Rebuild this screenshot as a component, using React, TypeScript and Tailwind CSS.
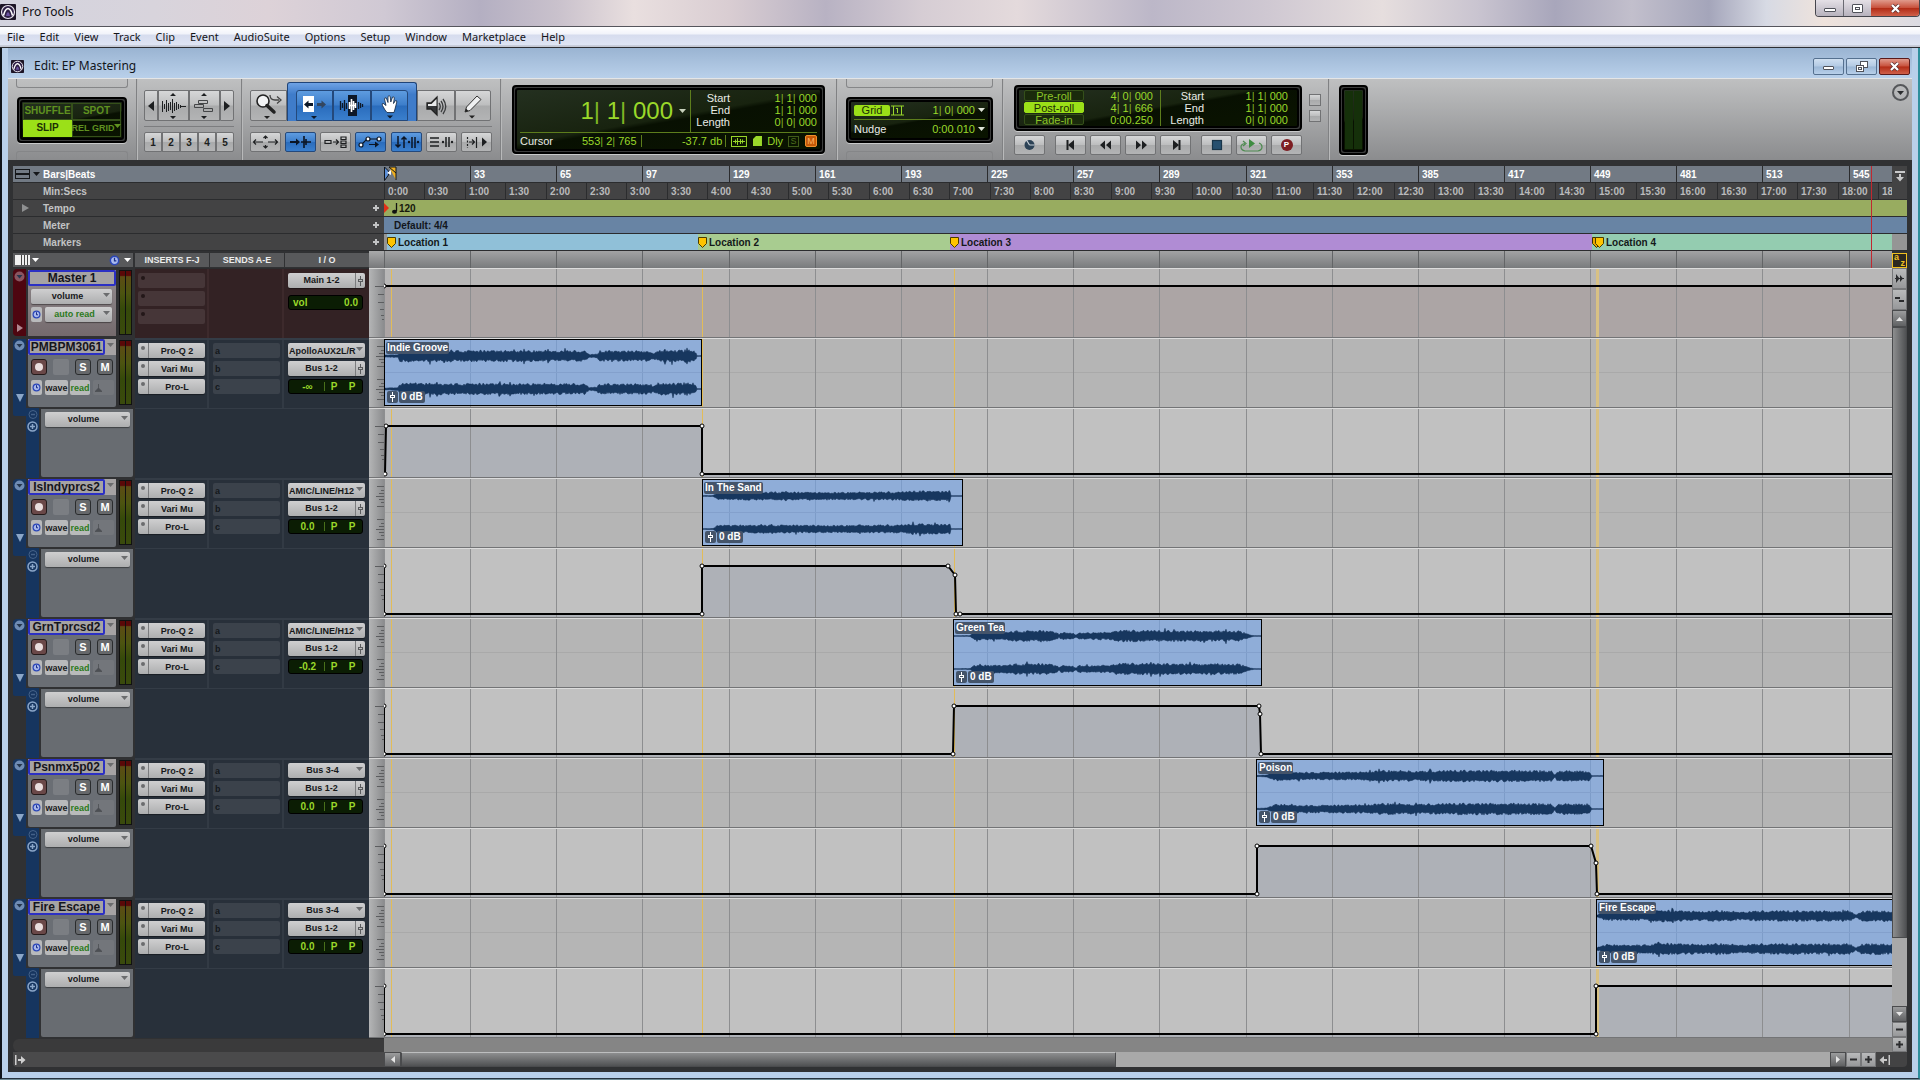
import type { ReactNode } from "react";
import clsx from "clsx";

type Point = [number, number];

interface Clip {
  name: string;
  start: number;
  width: number;
  envelope: Point[];
}

interface Track {
  name: string;
  input: string;
  output: string;
  level: string;
  clip: Clip;
  automation: Point[];
  seed: number;
}

// Pixels for 32 bars and for 30 seconds at 120 bpm
const BARS_STEP = 86.15;
const SECS_STEP = 40.38;
const TIMELINE_END = 2400;

const MENUS = [
  "File",
  "Edit",
  "View",
  "Track",
  "Clip",
  "Event",
  "AudioSuite",
  "Options",
  "Setup",
  "Window",
  "Marketplace",
  "Help",
];

const GRID_LINES = Array.from({ length: 28 }, (_, i) => Math.round(i * BARS_STEP));

const BAR_TICKS = Array.from({ length: 18 }, (_, i) => ({
  label: i === 0 ? "" : String(i * 32 + 1),
  width: Math.round((i + 1) * BARS_STEP) - Math.round(i * BARS_STEP),
}));

const SEC_TICKS = Array.from({ length: 38 }, (_, i) => ({
  label: `${Math.floor(i / 2)}:${i % 2 ? "30" : "00"}`,
  width: Math.round((i + 1) * SECS_STEP) - Math.round(i * SECS_STEP),
}));

const LOCATIONS = [
  { name: "Location 1", x: 7, width: 311, color: "bg-[#90c0d8]" },
  { name: "Location 2", x: 318, width: 252, color: "bg-[#a8cc90]" },
  { name: "Location 3", x: 570, width: 642, color: "bg-[#b08cd4]" },
  { name: "Location 4", x: 1212, width: 0, color: "bg-[#94ccb0]" },
];

const TRACKS: Track[] = [
  {
    name: "PMBPM3061",
    input: "ApolloAUX2L/R",
    output: "Bus 1-2",
    level: "-∞",
    seed: 3,
    clip: {
      name: "Indie Groove",
      start: 0,
      width: 318,
      envelope: [[0, 1], [13, 1.5], [15, 5.5], [200, 5], [204, 1.5], [212, 1.8], [215, 5], [262, 5], [268, 3], [276, 5.5], [308, 6], [311, 3], [312, 0.3]],
    },
    automation: [[1, 66], [2, 18], [318, 18], [318, 66]],
  },
  {
    name: "IsIndyprcs2",
    input: "AMIC/LINE/H12",
    output: "Bus 1-2",
    level: "0.0",
    seed: 11,
    clip: {
      name: "In The Sand",
      start: 318,
      width: 261,
      envelope: [[0, 0.3], [10, 0.5], [14, 3.5], [60, 4], [120, 3.5], [200, 4], [214, 5], [247, 4.5], [248, 0.3]],
    },
    automation: [[0, 18], [0, 66], [318, 66], [318, 18], [564, 18], [571, 27], [572, 66], [576, 66]],
  },
  {
    name: "GrnTprcsd2",
    input: "AMIC/LINE/H12",
    output: "Bus 1-2",
    level: "-0.2",
    seed: 23,
    clip: {
      name: "Green Tea",
      start: 569,
      width: 309,
      envelope: [[0, 0.3], [16, 0.4], [20, 3.5], [50, 4], [62, 5], [95, 5], [104, 3], [105, 1], [107, 3.5], [119, 3], [122, 1], [124, 3], [155, 3.5], [163, 5.5], [235, 5], [285, 5], [297, 1], [300, 0.3]],
    },
    automation: [[0, 18], [0, 66], [569, 66], [570, 18], [875, 18], [876, 26], [877, 66]],
  },
  {
    name: "Psnmx5p02",
    input: "Bus 3-4",
    output: "Bus 1-2",
    level: "0.0",
    seed: 37,
    clip: {
      name: "Poison",
      start: 872,
      width: 348,
      envelope: [[0, 0.6], [10, 1], [18, 4.5], [50, 3.5], [105, 4], [125, 5.5], [160, 4.5], [200, 5.5], [270, 5.5], [295, 5], [298, 1], [300, 5], [332, 5], [334, 2], [335, 0.3]],
    },
    automation: [[0, 18], [0, 66], [873, 66], [873, 18], [1207, 18], [1212, 35], [1213, 66]],
  },
  {
    name: "Fire Escape",
    input: "Bus 3-4",
    output: "Bus 1-2",
    level: "0.0",
    seed: 51,
    clip: {
      name: "Fire Escape",
      start: 1212,
      width: 620,
      envelope: [[0, 1], [8, 4], [45, 4], [65, 5.5], [110, 4.5], [120, 5.5], [140, 4], [170, 5], [253, 5], [259, 1.2], [265, 5], [610, 5], [620, 0.3]],
    },
    automation: [[0, 18], [0, 66], [1212, 66], [1212, 18]],
  },
];

function noise(n: number) {
  const v = Math.sin(n * 127.1) * 43758.5453;
  return v - Math.floor(v);
}

function envelopeAt(envelope: Point[], x: number) {
  for (let i = 1; i < envelope.length; i++) {
    const [x0, a0] = envelope[i - 1];
    const [x1, a1] = envelope[i];
    if (x <= x1) return a0 + ((a1 - a0) * (x - x0)) / (x1 - x0 || 1);
  }
  return envelope[envelope.length - 1][1];
}

function wavePath(clip: Clip, center: number, seed: number) {
  const top: string[] = [];
  const bottom: string[] = [];
  for (let x = 0; x <= clip.width; x++) {
    const amp = envelopeAt(clip.envelope, x);
    const spike = noise(x + seed * 7) > 0.965 ? 1.4 : 1;
    const up = amp * (0.62 + 0.5 * noise(x * 2 + seed)) * spike;
    const down = amp * (0.62 + 0.5 * noise(x * 3 + seed * 5)) * spike;
    top.push(`${x} ${(center - up).toFixed(1)}`);
    bottom.unshift(`${x} ${(center + down).toFixed(1)}`);
  }
  return `M${top.join("L")}L${bottom.join("L")}Z`;
}

function Caret({ className }: { className?: string }) {
  return (
    <svg width="7" height="4" viewBox="0 0 7 4" className={clsx("pointer-events-none shrink-0", className)}>
      <path d="M0 0h7L3.5 4z" fill="currentColor" />
    </svg>
  );
}

function Avid({ className }: { className?: string }) {
  return (
    <svg width="16" height="16" viewBox="0 0 16 16" className={className}>
      <rect width="16" height="16" rx="1" fill="#1c1426" />
      <circle cx="8" cy="8" r="6.5" fill="#2e1f45" stroke="#e8e4ee" strokeWidth="1.2" />
      <path d="M3.5 11.5Q5 5 8 4.500Q11 5 12.500 11.500" fill="none" stroke="#fff" strokeWidth="1.6" />
      <path d="M6 12Q6.500 8.500 8 8Q9.500 8.500 10 12z" fill="#6b52a0" />
    </svg>
  );
}

function Clock({ size = 9 }: { size?: number }) {
  return (
    <svg width={size} height={size} viewBox="0 0 9 9">
      <circle cx="4.500" cy="4.500" r="3.400" fill="#a9b9ee" stroke="#2b46b8" strokeWidth="1.2" />
      <path d="M4.500 2.200v2.600h1.500" fill="none" stroke="#1c2f86" />
    </svg>
  );
}

function FaderIcon({ className }: { className?: string }) {
  return (
    <svg width="7" height="10" viewBox="0 0 7 10" className={className}>
      <path d="M3.500 0v3M3.500 6v4" stroke="currentColor" />
      <rect x="1.500" y="3.500" width="4" height="2" fill="none" stroke="currentColor" />
    </svg>
  );
}

function Lcd({ className, children }: { className?: string; children?: ReactNode }) {
  return (
    <div className={clsx("rounded-[4px] border-2 border-black bg-[#3b3c3c] p-px shadow-[0_1px_0_#c8c9ca]", className)}>
      <div className="h-full rounded-[3px] border-2 border-black bg-[#0b1503] bg-[linear-gradient(170deg,#243020_0%,#18230f_48%,#081002_52%,#0a1400_100%)]">
        {children}
      </div>
    </div>
  );
}

const GREY_BTN =
  "flex items-center justify-center border border-[#717274] bg-[linear-gradient(#d6d7d8,#bdbebf_48%,#a9aaab_52%,#b3b4b5)] text-[#1d1f21]";
const BLUE_BTN =
  "flex items-center justify-center border border-[#24497c] bg-[linear-gradient(#5e9ce0,#3d7ecb_48%,#2a6cbc_52%,#3a7fcd)] text-[#0b1524]";

function SmallBtn({ label, active, children }: { label: string; active?: boolean; children: ReactNode }) {
  return (
    <button
      aria-label={label}
      aria-pressed={!!active}
      className={clsx("h-5 w-[31px] rounded-[2px]", active ? BLUE_BTN : GREY_BTN)}
    >
      <svg width="29" height="18" viewBox="0 0 29 18" fill="none" stroke="currentColor" strokeWidth="1.2">
        {children}
      </svg>
    </button>
  );
}

function Notch({ flip }: { flip?: boolean }) {
  return (
    <div
      className={clsx(
        "h-[9px] border-[#858688]",
        flip ? "rounded-t-[3px] border-x border-t" : "rounded-b-[3px] border-x border-b",
      )}
    />
  );
}

function Counter({ value, className }: { value: string; className?: string }) {
  return (
    <span className={clsx("whitespace-pre text-[#9ad82a]", className)}>
      {value.split("|").map((part, i) => (
        <span key={i}>
          {i > 0 && <span className="text-[#7fb424]">|</span>}
          {part}
        </span>
      ))}
    </span>
  );
}

function Group({ className, children }: { className?: string; children?: ReactNode }) {
  return (
    <div className={clsx("flex shrink-0 flex-col border-r border-[#808183] shadow-[1px_0_0_#b8b9ba]", className)}>
      {children}
    </div>
  );
}

function EditModes() {
  return (
    <Group className="w-[129px] justify-between px-2">
      <Notch />
      <Lcd className="mx-px h-[46px]">
        <div className="grid h-full grid-cols-2 grid-rows-2 p-px text-[10px] font-bold leading-3">
          <button className="border border-[#35501a] text-[#5f9120]">SHUFFLE</button>
          <button className="border border-[#35501a] text-[#5f9120]">SPOT</button>
          <button className="bg-[#9be018] text-[#1c2f04]" aria-pressed="true">
            SLIP
          </button>
          <button className="flex items-center justify-center whitespace-nowrap border border-[#35501a] text-[9px] text-[#5f9120]">
            REL GRID
            <Caret className="mb-1" />
          </button>
        </div>
      </Lcd>
      <Notch flip />
    </Group>
  );
}

function ZoomControls() {
  return (
    <Group className="w-[105px] px-[7px] pt-[11px]">
      <div className="flex">
        <button aria-label="Zoom out" className={clsx(GREY_BTN, "h-[31px] w-[14px] rounded-l-[2px]")}>
          <svg width="6" height="10" viewBox="0 0 6 10"><path d="M6 0v10L0 5z" fill="currentColor" /></svg>
        </button>
        <button aria-label="Audio zoom" className={clsx(GREY_BTN, "h-[31px] w-[31px]")}>
          <svg width="25" height="26" viewBox="0 0 25 26" fill="currentColor" stroke="currentColor">
            <path d="M9 3l3-3 3 3zM9 23l3 3 3-3z" stroke="none" />
            <path d="M1.500 8v11M3.500 11v5M5.500 7v12M7.500 10v8M9.500 9v8M11.500 6v14M13.500 10v8M15.500 9v8M17.500 11v5M19.500 12v3M20 13.500h5" />
          </svg>
        </button>
        <button aria-label="MIDI zoom" className={clsx(GREY_BTN, "h-[31px] w-[31px]")}>
          <svg width="25" height="26" viewBox="0 0 25 26" fill="none" stroke="#444648">
            <path d="M9 3l3-3 3 3zM9 23l3 3 3-3z" fill="#1d1f21" stroke="none" />
            <path d="M6.500 7.500h9v3h-9zM2.500 11.500h9v3h-9zM11.500 15.500h9v3h-9z" />
          </svg>
        </button>
        <button aria-label="Zoom in" className={clsx(GREY_BTN, "h-[31px] w-[14px] rounded-r-[2px]")}>
          <svg width="6" height="10" viewBox="0 0 6 10"><path d="M0 0v10l6-5z" fill="currentColor" /></svg>
        </button>
      </div>
      <div className="mt-[5px] h-px bg-[#7c7d7f]" />
      <div className="mt-[5px] flex">
        {["1", "2", "3", "4", "5"].map((n) => (
          <button key={n} className={clsx(GREY_BTN, "h-5 w-[18px] text-[10px] font-bold first:rounded-l-[2px] last:rounded-r-[2px]")}>
            {n}
          </button>
        ))}
      </div>
    </Group>
  );
}

function EditTools() {
  return (
    <Group className="w-[259px] px-2 pt-[3px]">
      <div className="flex items-end">
        <button aria-label="Zoomer" className={clsx(GREY_BTN, "h-[31px] w-[37px] rounded-l-[2px]")}>
          <svg width="30" height="28" viewBox="0 0 30 28" fill="none">
            <circle cx="9" cy="9" r="6" fill="#f2f3f4" stroke="#222" strokeWidth="1.6" />
            <path d="M13 13.500l7 6.500" stroke="#222" strokeWidth="3.5" strokeLinecap="round" />
            <path d="M16 3q0 5 5 5h4M23 4.500l4 3.500-4 3.500" stroke="#444" strokeWidth="1.3" />
            <path d="M10 24h6l-3 3z" fill="#222" />
          </svg>
        </button>
        <div className="flex rounded-t-[3px] border border-b-0 border-[#1f4478] bg-[linear-gradient(#6ea2e4,#3f7cca_30%)] px-2 pt-[7px]">
          <button aria-label="Trim" aria-pressed="true" className={clsx(BLUE_BTN, "h-[31px] w-[37px] rounded-tl-[3px]")}>
            <svg width="26" height="26" viewBox="0 0 26 26" fill="none" stroke="#0d1828">
              <rect x="1" y="3" width="11" height="16" fill="#fff" stroke="none" />
              <path d="M2 11.500l4.500-4v2.500H11v3H6.500v2.500z" fill="#0d1828" stroke="none" />
              <path d="M24 11.500l-4.500-4v2.500H15v3h4.500v2.500z" fill="#33465f" stroke="none" />
              <path d="M9 23h6l-3 3z" fill="#0d1828" stroke="none" />
            </svg>
          </button>
          <button aria-label="Selector" aria-pressed="true" className={clsx(BLUE_BTN, "h-[31px] w-[38px]")}>
            <svg width="28" height="24" viewBox="0 0 28 24" stroke="#0d1828">
              <rect x="10" y="1" width="9" height="21" fill="#0d1828" stroke="none" />
              <path d="M2.500 7v9M4.500 9v5M6.500 6v11M8.500 9v6M20.500 8v7M22.500 9v5M24.500 10v3" strokeWidth="1.300" />
              <path d="M11 11.500h7M11.500 8v7M13.500 5v13M15.500 7v9M17.500 9v5" stroke="#fff" strokeWidth="1.600" />
            </svg>
          </button>
          <button aria-label="Grabber" aria-pressed="true" className={clsx(BLUE_BTN, "h-[31px] w-[37px] rounded-tr-[3px]")}>
            <svg width="22" height="26" viewBox="0 0 22 26">
              <path
                d="M6 17L3.500 12.500Q2.500 10.500 4 10.200L7 12.500 5.500 6Q5.600 4 7.400 5.200L9 9.500 9 3.500Q10 1.800 11.200 3.500L11.800 9 13.500 4Q15 3.200 15.300 5L14.500 10.500 16.500 7.500Q18 7.300 17.800 9L16 16 15 19.500H8z"
                fill="#fff"
                stroke="#10233c"
                strokeWidth="0.8"
              />
              <path d="M8 22.500h6l-3 3z" fill="#0d1828" />
            </svg>
          </button>
        </div>
        <button aria-label="Scrubber" className={clsx(GREY_BTN, "h-[31px] w-[38px]")}>
          <svg width="22" height="22" viewBox="0 0 22 22" fill="none" stroke="#3a3c3e" strokeWidth="1.3">
            <path d="M2 8h4l6-6v18l-6-6H2z" fill="#333537" stroke="#222" />
            <path d="M3 9h3.500l5-5v7H3z" fill="#e8e9ea" stroke="none" />
            <path d="M14 8q2.500 3.500 0 7M16 6q4 5.500 0 11M18 4q5.500 7.500 0 15" />
          </svg>
        </button>
        <button aria-label="Pencil" className={clsx(GREY_BTN, "h-[31px] w-9 rounded-r-[2px]")}>
          <svg width="20" height="26" viewBox="0 0 20 26">
            <path d="M2 19l1.500-5L14 3l4 3.500L7 17.500z" fill="#eff0f1" stroke="#333" />
            <path d="M2 19l1-3.500 2.500 2.500z" fill="#222" />
            <path d="M6 22.500h6l-3 3z" fill="#222" />
          </svg>
        </button>
      </div>
      <div className="mt-[5px] h-px bg-[#7c7d7f]" />
      <div className="mt-[5px] flex justify-between">
        <SmallBtn label="Zoom toggle">
          <path d="M3 9h9M17 9h9M14.500 3v3M14.500 12v3M5 6.500L2.500 9 5 11.500M24 6.500L26.500 9 24 11.500M12.500 5l2-2 2 2M12.500 13l2 2 2-2" />
        </SmallBtn>
        <SmallBtn label="Tab to transients" active>
          <path d="M4 9h7" strokeWidth="2" />
          <path d="M10 5.500l4 3.500-4 3.500z" fill="currentColor" stroke="none" />
          <path d="M15 9h10M18 3v12M20 6v6" strokeWidth="1.600" />
        </SmallBtn>
        <SmallBtn label="Mirrored MIDI editing">
          <path d="M4 7.500h6v3H4zM20 4h5v2.500h-5zM20 8h5v2.500h-5zM20 12h5v2.500h-5zM12 9h5M15 6.500L17.500 9 15 11.500" />
        </SmallBtn>
        <SmallBtn label="Automation follows edit" active>
          <path d="M5.500 11.500L11 6h12M13 11.500h7" />
          <path d="M19 8.500l4 3-4 3z" fill="currentColor" stroke="none" />
          <circle cx="5" cy="12" r="2" fill="#fff" />
          <circle cx="12" cy="6" r="2" fill="#fff" />
          <circle cx="23" cy="6" r="2" fill="#fff" />
        </SmallBtn>
        <SmallBtn label="Link track and edit selection" active>
          <path d="M6 3v11M3.500 11.500L6 14l2.500-2.500M12 15V4M9.500 6.500L12 4l2.500 2.500M20 4v11M23 4v11" strokeWidth="1.500" />
          <circle cx="17" cy="9" r="1.200" fill="currentColor" stroke="none" />
          <circle cx="26" cy="9" r="1.200" fill="currentColor" stroke="none" />
        </SmallBtn>
        <SmallBtn label="Link timeline and edit selection">
          <path d="M3 5h9M3 9h9M3 13h9M19 4v10M22 4v10" strokeWidth="1.500" />
          <circle cx="16" cy="9" r="1.200" fill="currentColor" stroke="none" />
          <circle cx="25" cy="9" r="1.200" fill="currentColor" stroke="none" />
        </SmallBtn>
        <SmallBtn label="Insertion follows playback">
          <path d="M5.500 4v11" strokeDasharray="2 1.500" />
          <path d="M7 9h5M10 6.500L12.500 9 10 11.500M14.500 4v11" />
          <path d="M20 4.500v9l5-4.500z" fill="currentColor" stroke="none" />
        </SmallBtn>
      </div>
    </Group>
  );
}

function SelectionRows({ className }: { className: string }) {
  const rows = [
    ["Start", "1| 1| 000"],
    ["End", "1| 1| 000"],
    ["Length", "0| 0| 000"],
  ];
  return (
    <div className={clsx("flex flex-col text-[11px] leading-3", className)}>
      {rows.map(([label, value]) => (
        <div key={label} className="flex">
          <span className="w-[39px] text-right text-[#e9ece6]">{label}</span>
          <Counter value={value} className="flex-1 text-right" />
        </div>
      ))}
    </div>
  );
}

function MainCounter() {
  return (
    <Group className="w-[336px] px-[11px] pt-[6px]">
      <Lcd className="h-[69px]">
        <div className="flex h-full flex-col px-[3px]">
          <div className="flex h-[43px] border-b border-[#5d7d1c]">
            <div className="flex w-[171px] items-center justify-end gap-[6px] border-r border-[#5d7d1c] pr-1">
              <Counter value="1| 1| 000" className="text-2xl leading-7" />
              <button aria-label="Counter format" className="text-[#c9d2bd]">
                <Caret />
              </button>
            </div>
            <SelectionRows className="flex-1 pt-[2px]" />
          </div>
          <div className="flex flex-1 items-center text-[11px] leading-3 text-[#9ad82a]">
            <span className="w-[60px] text-[#e9ece6]">Cursor</span>
            <Counter value="553| 2| 765" className="w-[62px] border-r border-[#5d7d1c] pr-1 text-right" />
            <span className="w-[85px] border-r border-[#5d7d1c] pr-[3px] text-right">-37.7 db</span>
            <svg width="16" height="11" viewBox="0 0 16 11" className="ml-[5px]" fill="none" stroke="currentColor">
              <rect x="0.500" y="0.500" width="15" height="10" />
              <path d="M2 5.500h12M4.500 3.500v4M6.500 2v7M9.500 3v5M11.500 3.500v4" />
            </svg>
            <svg width="9" height="10" viewBox="0 0 9 10" className="ml-[6px]" fill="currentColor">
              <path d="M3 0h6v10H0V3z" />
            </svg>
            <span className="ml-[5px]">Dly</span>
            <span className="ml-[5px] flex size-[11px] items-center justify-center border border-[#3f5a18] text-[9px] text-[#4d6e1c]">
              S
            </span>
            <span className="ml-[6px] flex size-3 items-center justify-center rounded-[2px] border border-[#f0902c] bg-[#c55a08] text-[9px] text-[#ffb060]">
              M
            </span>
          </div>
        </div>
      </Lcd>
    </Group>
  );
}

function GridNudge() {
  return (
    <Group className="w-[166px] justify-between px-[9px]">
      <Notch />
      <Lcd className="h-[46px]">
        <div className="flex h-full flex-col px-[3px] text-[11px] leading-3">
          <div className="flex flex-1 items-center border-b border-[#5d7d1c]">
            <button className="h-[11px] w-9 rounded-[2px] bg-[#9be018] leading-[11px] text-[#1c2f04]" aria-pressed="true">
              Grid
            </button>
            <svg width="13" height="11" viewBox="0 0 13 11" className="ml-px text-[#9ad82a]" fill="none" stroke="currentColor">
              <path d="M0 1h13M0 10h13M2.500 1v9M10.500 1v9M6.500 3v5M5 3.500h1.500" />
            </svg>
            <button className="ml-auto flex items-center gap-[3px]" aria-label="Grid value">
              <Counter value="1| 0| 000" />
              <Caret className="text-[#dfe4d8]" />
            </button>
          </div>
          <div className="flex flex-1 items-center">
            <span className="text-[#e9ece6]">Nudge</span>
            <button className="ml-auto flex items-center gap-[3px]" aria-label="Nudge value">
              <Counter value="0:00.010" />
              <Caret className="text-[#dfe4d8]" />
            </button>
          </div>
        </div>
      </Lcd>
      <Notch flip />
    </Group>
  );
}

function Transport() {
  const rolls = [
    { name: "Pre-roll", value: "4| 0| 000", on: false },
    { name: "Post-roll", value: "4| 1| 666", on: true },
    { name: "Fade-in", value: "0:00.250", on: false },
  ];
  return (
    <Group className="w-[326px] pl-[11px] pt-[6px]">
      <div className="flex items-center gap-[7px]">
        <Lcd className="h-[46px] w-[288px]">
          <div className="flex h-full items-center px-[5px]">
            <div className="flex w-[137px] flex-col border-r border-[#5d7d1c] pr-[7px] text-[11px] leading-3">
              {rolls.map((roll) => (
                <div key={roll.name} className="flex h-3">
                  <button
                    aria-pressed={roll.on}
                    className={clsx(
                      "h-[11px] w-[60px] rounded-[2px] border leading-[10px]",
                      roll.on
                        ? "border-[#9be018] bg-[#9be018] text-[#1c2f04]"
                        : "border-[#35501a] bg-[#1a2a0c] text-[#8cc428]",
                    )}
                  >
                    {roll.name}
                  </button>
                  <Counter value={roll.value} className="flex-1 text-right" />
                </div>
              ))}
            </div>
            <SelectionRows className="flex-1 pl-1 pr-1" />
          </div>
        </Lcd>
        <div className="flex flex-col gap-1">
          <button aria-label="Expand transport" className={clsx(GREY_BTN, "size-3")} />
          <button aria-label="Collapse transport" className={clsx(GREY_BTN, "size-3")} />
        </div>
      </div>
      <div className="mt-[4px] flex gap-1">
        <SmallBtn label="Online">
          <circle cx="14.500" cy="9" r="5" fill="#2c4256" stroke="none" />
          <path d="M14.500 9l-3-5M14.500 9h5" stroke="#c8d0d8" />
        </SmallBtn>
        <div className="w-[2px]" />
        <SmallBtn label="Return to zero">
          <path d="M11.500 4v10" strokeWidth="2" />
          <path d="M18 4v10l-6-5z" fill="currentColor" stroke="none" />
        </SmallBtn>
        <SmallBtn label="Rewind">
          <path d="M14 4.500v9L9 9zM20 4.500v9L15 9z" fill="currentColor" stroke="none" />
        </SmallBtn>
        <SmallBtn label="Fast forward">
          <path d="M10 4.500v9L15 9zM16 4.500v9L21 9z" fill="currentColor" stroke="none" />
        </SmallBtn>
        <SmallBtn label="Go to end">
          <path d="M18.500 4v10" strokeWidth="2" />
          <path d="M12 4v10l6-5z" fill="currentColor" stroke="none" />
        </SmallBtn>
        <div className="w-[2px]" />
        <SmallBtn label="Stop">
          <rect x="10.500" y="4.500" width="9" height="9" fill="#27506f" stroke="#193549" />
        </SmallBtn>
        <SmallBtn label="Play">
          <path d="M8 7.500Q4 8 4 11t4 4h13q4-1 4-4t-3-4M6 5l3 2.500L6 10" stroke="#4e8a50" />
          <path d="M12 3v9l6-4.500z" fill="#3f8c42" stroke="none" />
        </SmallBtn>
        <button aria-label="Record" className={clsx(GREY_BTN, "h-5 w-[31px] rounded-[2px]")}>
          <span className="flex size-3 items-center justify-center rounded-full bg-[#7d1d22] text-[8px] font-bold text-white">
            P
          </span>
        </button>
      </div>
    </Group>
  );
}

function Toolbar() {
  return (
    <div className="flex h-[82px] border-t border-[#e4e5e6] bg-[linear-gradient(#bfc0c1,#8b8c8e)] font-['Liberation_Sans',sans-serif]">
      <EditModes />
      <ZoomControls />
      <EditTools />
      <MainCounter />
      <GridNudge />
      <Transport />
      <div className="flex flex-1 items-start justify-between pl-[10px] pr-[3px]">
        <Lcd className="mt-[6px] h-[70px] w-[29px]">
          <div className="flex h-full justify-center gap-px py-px">
            <div className="w-2 bg-[#15300a]" />
            <div className="w-2 bg-[#15300a]" />
          </div>
        </Lcd>
        <button
          aria-label="Edit window view options"
          className="mt-[5px] flex size-[17px] items-center justify-center rounded-full border-2 border-[#55575a] text-[#2a2c2e]"
        >
          <Caret />
        </button>
      </div>
    </div>
  );
}

function RulerRow({
  label,
  left,
  plus,
  highlight,
  right,
  children,
}: {
  label: string;
  left?: ReactNode;
  plus?: boolean;
  highlight?: boolean;
  right: ReactNode;
  children: ReactNode;
}) {
  return (
    <div className="flex h-[17px] border-b border-[#2b2c2e]">
      <div
        className={clsx(
          "flex w-[371px] shrink-0 items-center pr-[5px] text-[10px] font-bold",
          highlight ? "bg-[#727a84] text-white" : "bg-[#434344] text-[#c2c3c4]",
        )}
      >
        <span className="flex w-[30px] items-center gap-[3px] pl-[2px]">{left}</span>
        <span className="flex-1">{label}</span>
        {plus && (
          <button aria-label={`Add to ${label}`} className="text-[#c2c3c4]">
            <svg width="6" height="6" viewBox="0 0 6 6"><path d="M3 0v6M0 3h6" stroke="currentColor" strokeWidth="2" /></svg>
          </button>
        )}
      </div>
      <div className="flex min-w-0 flex-1 overflow-hidden text-[10px] font-bold">{children}</div>
      <div className="flex w-[15px] shrink-0">{right}</div>
    </div>
  );
}

function MarkerPin({ double }: { double?: boolean }) {
  return (
    <svg width={double ? 12 : 9} height="11" viewBox={double ? "-3 0 12 11" : "0 0 9 11"} className="shrink-0">
      {double && <path d="M-2.500 .5h8v6l-4 4-4-4z" fill="#e8a800" stroke="#3a3000" />}
      <path d="M.5 .5h8v6l-4 4-4-4z" fill="#ffc400" stroke="#4a3c00" />
    </svg>
  );
}

function Rulers() {
  return (
    <div className="relative">
      <RulerRow
        label="Bars|Beats"
        highlight
        left={
          <>
            <svg width="15" height="10" viewBox="0 0 15 10" fill="none" stroke="#15171a">
              <rect x=".5" y=".5" width="14" height="9" />
              <path d="M0 5h15" strokeWidth="2" />
            </svg>
            <Caret className="text-[#15171a]" />
          </>
        }
        right={
          <button aria-label="Timeline insertion" className="flex h-8 w-full items-start justify-center bg-[#434344] pt-[5px] text-[#c8c9ca]">
            <svg width="10" height="11" viewBox="0 0 10 11" fill="currentColor"><path d="M0 0h10v2H0zM4 3h2v3h3L5 10.500 1 6h3z" /></svg>
          </button>
        }
      >
        {BAR_TICKS.map((tick, i) => (
          <span
            key={i}
            className={clsx(
              "flex items-center bg-[#727a84] text-white",
              i > 0 && "border-l border-[#2b2c2e] pl-[3px]",
              i === BAR_TICKS.length - 1 ? "flex-1" : "shrink-0",
            )}
            style={i < BAR_TICKS.length - 1 ? { width: tick.width } : undefined}
          >
            {i === 0 && (
              <svg width="14" height="16" viewBox="0 0 14 16">
                <path d="M.5 1v13.500l4-5.500V5z" fill="#5b8fd8" stroke="#10141a" />
                <path d="M5 1h7v13M5 1l7 6" fill="#f0b020" stroke="#10141a" />
                <path d="M3 7l4-3v5z" fill="#fff" />
              </svg>
            )}
            {tick.label}
          </span>
        ))}
      </RulerRow>
      <RulerRow label="Min:Secs" right={<div className="flex-1 bg-[#434344]" />}>
        {SEC_TICKS.map((tick, i) => (
          <span
            key={i}
            className={clsx(
              "flex items-center border-l border-[#2b2c2e] bg-[#434344] pl-[3px] text-[#b9babb]",
              i === SEC_TICKS.length - 1 ? "min-w-0 flex-1 overflow-hidden" : "shrink-0",
            )}
            style={i < SEC_TICKS.length - 1 ? { width: tick.width } : undefined}
          >
            {tick.label}
          </span>
        ))}
      </RulerRow>
      <RulerRow
        label="Tempo"
        plus
        left={
          <button aria-label="Expand tempo" className="ml-[7px] text-[#8f9091]">
            <svg width="7" height="8" viewBox="0 0 7 8"><path d="M0 0v8l7-4z" fill="currentColor" /></svg>
          </button>
        }
        right={<div className="flex-1 bg-[#98ac60]" />}
      >
        <span className="flex flex-1 items-center bg-[#98ac60] text-[#15180c]">
          <svg width="15" height="12" viewBox="0 0 15 12">
            <path d="M0 1l5 5-5 5z" fill="#e03018" />
            <path d="M12.500 1v8" stroke="#111" strokeWidth="1.3" />
            <ellipse cx="10.500" cy="9.800" rx="2.500" ry="2" fill="#111" />
          </svg>
          120
        </span>
      </RulerRow>
      <RulerRow label="Meter" plus right={<div className="flex-1 bg-[#6884a4]" />}>
        <span className="flex flex-1 items-center bg-[#6884a4] pl-[10px] text-[#12161c]">Default: 4/4</span>
      </RulerRow>
      <RulerRow label="Markers" plus right={<div className="flex-1 bg-[#959595]" />}>
        <span className="w-[3px] shrink-0 bg-[#959595]" />
        {LOCATIONS.map((loc) => (
          <span
            key={loc.name}
            className={clsx("flex items-center gap-[2px] overflow-hidden text-[#14181a]", loc.color, loc.width ? "shrink-0" : "flex-1")}
            style={loc.width ? { width: loc.width } : undefined}
          >
            <MarkerPin double={loc.name === "Location 4"} />
            {loc.name}
          </span>
        ))}
      </RulerRow>
      <div className="pointer-events-none absolute -bottom-[17px] top-0 w-px bg-[#c02830]" style={{ left: 371 + 1487 }} />
    </div>
  );
}

function TimelineGrid() {
  return (
    <>
      {GRID_LINES.map((x) => (
        <rect key={x} x={x} y="0" width="1" height="100%" fill="#8d8e90" />
      ))}
    </>
  );
}

function MarkerLines() {
  return (
    <>
      <rect x="7" y="0" width="1" height="100%" fill="#e2bc58" />
      <rect x="318" y="0" width="1" height="100%" fill="#e2bc58" />
      <rect x="570" y="0" width="1" height="100%" fill="#e2bc58" />
      <rect x="1212" y="0" width="3" height="100%" fill="#d8c184" />
    </>
  );
}

function ColumnHeaders() {
  const cell = "flex h-[14px] items-center justify-center bg-[#58595b] text-[9px] font-bold text-[#ececec]";
  return (
    <div className="flex h-[17px] items-end">
      <div className="mb-px flex h-[14px] w-[120px] items-center bg-[#58595b] px-[2px] text-white">
        <svg width="15" height="10" viewBox="0 0 15 10">
          <rect width="15" height="10" fill="#f0f0f0" />
          <path d="M6.500 0v10M9.500 0v10M12.500 0v10" stroke="#444" />
        </svg>
        <Caret className="ml-[2px]" />
        <span className="ml-auto mr-1"><Clock size={11} /></span>
        <Caret />
      </div>
      <div className={clsx(cell, "mb-px ml-[2px] w-[74px] pt-px")}>INSERTS F-J</div>
      <div className={clsx(cell, "mb-px ml-px w-[74px] pt-px")}>SENDS A-E</div>
      <div className={clsx(cell, "mb-px ml-px w-[84px] pt-px")}>I / O</div>
      <div className="h-full w-[15px] bg-[linear-gradient(#a9aaab,#77787a)]" />
      <div className="h-full min-w-0 flex-1 overflow-hidden bg-[linear-gradient(#a2a3a4,#797b7d)]">
        <svg className="block h-full w-full">
          {GRID_LINES.map((x) => (
            <rect key={x} x={x} width="1" height="17" fill="#636567" />
          ))}
        </svg>
      </div>
    </div>
  );
}

function Scale({ kind }: { kind: "audio" | "lane" }) {
  const ticks: Point[] =
    kind === "lane"
      ? [[18, 9], [26, 6], [34, 6], [41, 4], [47, 3], [51, 2]]
      : [[8, 7], [12, 3], [15, 5], [18, 8], [21, 5], [24, 3], [28, 7], [41, 7], [45, 3], [48, 5], [51, 8], [54, 5], [57, 3], [61, 7]];
  return (
    <div className="w-[15px] shrink-0 border-b border-t border-b-[#737476] border-t-[#d4d4d4] bg-[linear-gradient(90deg,#b4b5b6,#8b8c8e)]">
      <svg width="15" height="68" viewBox="0 0 15 68">
        {ticks.map(([y, w]) => (
          <rect key={y} x={15 - w} y={y - 1} width={w} height="1" fill="#5d5e60" />
        ))}
      </svg>
    </div>
  );
}

// Points are measured from the top of the row, whose first pixel is its border
function Automation({ points, fill }: { points: Point[]; fill: string }) {
  const last = points[points.length - 1];
  const line = [...points, [TIMELINE_END, last[1]] as Point];
  const lead: Point[] = points[0][1] === 66 ? [[0, 66]] : [];
  const d = [...lead, ...line].map(([x, y]) => `${x} ${y - 1}`).join("L");
  return (
    <>
      <path d={`M${d}L${TIMELINE_END} 70L0 70Z`} fill={fill} />
      <TimelineGrid />
      <MarkerLines />
      <path d={`M${d}`} fill="none" stroke="#000" strokeWidth="2" />
      {points.map(([x, y]) => (
        <circle key={`${x}-${y}`} cx={x} cy={y - 1} r="2" fill="#fff" stroke="#000" />
      ))}
    </>
  );
}

function ClipView({ clip, seed }: { clip: Clip; seed: number }) {
  return (
    <div
      className="absolute top-0 h-[67px] overflow-hidden border border-black bg-[#8fadd8]"
      style={{ left: clip.start, width: clip.width }}
    >
      <svg width={clip.width} height="65" className="absolute left-0 top-0">
        {GRID_LINES.map((x) => (
          <rect key={x} x={x - clip.start - 1} y="0" width="1" height="65" fill="#7d9cc8" />
        ))}
        <rect y="32" width="100%" height="1" fill="#83a0cc" />
        <path d={wavePath(clip, 16, seed)} fill="#17375f" stroke="#0f2a4e" strokeWidth="0.5" />
        <path d={wavePath(clip, 49, seed + 2)} fill="#17375f" stroke="#0f2a4e" strokeWidth="0.5" />
      </svg>
      <div className="relative flex h-full flex-col items-start justify-between pb-[2px] pl-px pt-[2px] text-[10px] font-bold leading-3 text-white">
        <span className="rounded-[2px] bg-[#44546a] px-px">{clip.name}</span>
        <span className="flex gap-px pl-px">
          <span className="flex w-[11px] items-center justify-center rounded-[2px] bg-[#44546a]">
            <FaderIcon />
          </span>
          <span className="rounded-[2px] bg-[#44546a] px-[2px]">0 dB</span>
        </span>
      </div>
    </div>
  );
}

function PlateSelect({ label, value, className }: { label: string; value: string; className?: string }) {
  return (
    <div className={clsx("relative h-[15px]", className)}>
      <select
        aria-label={label}
        defaultValue={value}
        className="block h-full w-full appearance-none rounded-[2px] bg-[linear-gradient(#cfcfd0,#adaeaf)] p-0 pr-2 pt-px text-[9px] font-bold text-inherit shadow-[0_1px_1px_#0006] [text-align-last:center]"
      >
        <option>{value}</option>
      </select>
      <Caret className="absolute right-[2px] top-1 text-[#6b6c6e]" />
    </div>
  );
}

function OutputButton({ value }: { value: string }) {
  return (
    <button className="flex h-[15px] w-[77px] items-center rounded-[2px] bg-[linear-gradient(#cfcfd0,#adaeaf)] text-[9px] font-bold shadow-[0_1px_1px_#0006]">
      <span className="flex-1 pt-px">{value}</span>
      <span className="flex h-full w-[10px] items-center justify-center border-l border-[#7b7c7e] text-[#5a5b5d]">
        <FaderIcon />
      </span>
    </button>
  );
}

function Meter() {
  return (
    <div className="mt-[2px] flex h-[65px] w-[13px] gap-px border border-[#111] bg-[#111]">
      <div className="flex-1 bg-[linear-gradient(#5a0808_0_7%,#5c4c14_9%,#4c5410_35%,#35490a_60%,#3a4a0c)]" />
      <div className="flex-1 bg-[linear-gradient(#5a0808_0_7%,#5c4c14_9%,#4c5410_35%,#35490a_60%,#3a4a0c)]" />
    </div>
  );
}

const NAME_BTN =
  "border-2 border-[#2c30c4] bg-[#a6a3a4] text-center text-xs font-bold leading-[13px] text-[#15151c] rounded-[2px]";

function Bubble({ tone }: { tone: string }) {
  return (
    <svg width="11" height="11" viewBox="0 0 11 11">
      <circle cx="5.500" cy="5.500" r="5" fill={tone} />
      <path d="M2.500 4h6l-3 3.500z" fill="#24364e" />
    </svg>
  );
}

function MasterRow() {
  return (
    <div className="flex h-[70px]">
      <div className="mb-[2px] mt-px flex w-[13px] flex-col items-center justify-between rounded-l-[4px] bg-[#4e0610] pb-1 pt-[2px]">
        <Bubble tone="#8a5560" />
        <svg width="6" height="8" viewBox="0 0 6 8"><path d="M0 0v8l6-4z" fill="#b08890" /></svg>
      </div>
      <div className="ml-[2px] mt-[2px] flex h-[66px] w-[88px] flex-col bg-[linear-gradient(#958d90,#746a6d)]">
        <button className={clsx(NAME_BTN, "h-4 w-[88px]")}>Master 1</button>
        <PlateSelect label="Master view" value="volume" className="ml-[3px] mt-[3px] w-[81px] text-[#17181a]" />
        <div className="mt-[3px] flex gap-[3px] pl-[3px]">
          <button aria-label="Timebase" className="flex h-[15px] w-[11px] items-center justify-center rounded-[2px] bg-[#b9babb]">
            <Clock />
          </button>
          <PlateSelect label="Master automation" value="auto read" className="w-[67px] text-[#2c7a1c]" />
        </div>
      </div>
      <div className="ml-[3px]"><Meter /></div>
      <div className="ml-[3px] flex flex-1 border-t border-[#2c2c2e] bg-[#332224] text-[#17181a]">
        <div className="flex w-[74px] flex-col gap-[3px] border-r-2 border-[#3d2a2c] pl-[3px] pt-1">
          {[0, 1, 2].map((i) => (
            <div key={i} className="h-[15px] w-[67px] rounded-[2px] bg-[#463638] pl-[3px] pt-[3px]">
              <div className="size-1 rounded-full bg-[#231718]" />
            </div>
          ))}
        </div>
        <div className="w-[75px] border-r-2 border-[#3d2a2c]" />
        <div className="flex flex-col pl-1 pt-1">
          <OutputButton value="Main 1-2" />
          <div className="mt-[7px] flex h-[15px] w-[75px] items-center justify-between rounded-[3px] border border-black bg-[#0b1d04] px-1 text-[10px] font-bold text-[#9ad82a]">
            <span>vol</span>
            <span>0.0</span>
          </div>
        </div>
      </div>
    </div>
  );
}

function TrackHead({ track }: { track: Track }) {
  return (
    <div className="flex h-[70px]">
      <div className="mt-px flex w-[13px] flex-col items-center justify-between rounded-tl-[4px] bg-[#16355f] pb-[6px] pt-px">
        <Bubble tone="#6f8cb4" />
        <svg width="8" height="8" viewBox="0 0 8 8"><path d="M0 0h8L4 8z" fill="#8ba6c8" /></svg>
      </div>
      <div className="ml-[2px] mt-px flex h-[68px] w-[88px] flex-col rounded-b-[2px] bg-[#6a6e74]">
        <div className="flex h-4 bg-[#a6a3a4]">
          <button className={clsx(NAME_BTN, "w-[77px] whitespace-nowrap")}>{track.name}</button>
          <button aria-label="Playlists" className="flex flex-1 items-start justify-center pt-1 text-[#6a6b6d]">
            <Caret />
          </button>
        </div>
        <div className="flex pl-[3px] pt-1">
          <button aria-label="Record enable" className="flex size-4 items-center justify-center rounded-[3px] border border-[#241a1a] bg-[#6a4848]">
            <span className="size-2 rounded-full bg-[#eadede]" />
          </button>
          <button aria-label="Input monitor" className="ml-[6px] size-4 rounded-[2px] bg-[#7b7e83]" />
          <button className="ml-[6px] size-4 rounded-[3px] border border-[#2a2c2e] bg-[#66686b] text-[11px] font-bold leading-3 text-white">S</button>
          <button className="ml-[6px] size-4 rounded-[3px] border border-[#2a2c2e] bg-[#66686b] text-[11px] font-bold leading-3 text-white">M</button>
        </div>
        <div className="flex pl-[3px] pt-[5px] text-[9px] font-bold leading-3">
          <button aria-label="Timebase" className="flex h-[15px] w-[11px] items-center justify-center rounded-[2px] bg-[#b9babb]">
            <Clock />
          </button>
          <button className="ml-[3px] flex h-[15px] w-[23px] items-center justify-center rounded-[2px] bg-[#b9babb] text-[#17181a]">
            wave
          </button>
          <button className="ml-[2px] flex h-[15px] w-5 items-center justify-center rounded-[2px] bg-[#b9babb] text-[#2c7a1c]">
            read
          </button>
          <button aria-label="Elastic audio" className="ml-[3px] flex h-[15px] w-[21px] items-center rounded-[2px] bg-[#73767b] pl-[2px] text-[#4c4f53]">
            <svg width="7" height="8" viewBox="0 0 7 8"><path d="M3.500 0v7M0 7.500h7L3.500 4z" fill="currentColor" stroke="currentColor" strokeWidth="0.800" /></svg>
          </button>
        </div>
      </div>
      <div className="ml-[3px]"><Meter /></div>
      <div className="ml-[3px] flex flex-1 border-t-2 border-[#343c46] bg-[#28303a] text-[9px] font-bold text-[#17181a]">
        <div className="flex w-[74px] flex-col gap-[3px] border-r-2 border-[#323a44] pl-[3px] pt-[3px]">
          {["Pro-Q 2", "Vari Mu", "Pro-L"].map((plugin) => (
            <button key={plugin} className="flex h-[15px] w-[67px] rounded-[2px] bg-[linear-gradient(#cfcfd0,#adaeaf)] shadow-[0_1px_1px_#0006]">
              <span className="flex h-full w-[11px] justify-center border-r border-[#7b7c7e] pt-[3px]">
                <span className="size-1 rounded-full bg-[#6b6c6e]" />
              </span>
              <span className="flex-1 leading-4">{plugin}</span>
            </button>
          ))}
        </div>
        <div className="flex w-[75px] flex-col gap-[3px] border-r-2 border-[#323a44] pl-1 pt-[3px]">
          {["a", "b", "c"].map((send) => (
            <button key={send} className="h-[15px] w-[67px] rounded-[2px] bg-[#3b424b] pl-[2px] text-left leading-4 text-[#14181c]">
              {send}
            </button>
          ))}
        </div>
        <div className="flex flex-col gap-[3px] pl-1 pt-[3px]">
          {track.input.startsWith("Bus") ? (
            <PlateSelect label={`${track.name} input`} value={track.input} className="w-[77px]" />
          ) : (
            <button className="relative h-[15px] w-[77px] whitespace-nowrap rounded-[2px] bg-[linear-gradient(#cfcfd0,#adaeaf)] pl-px text-left leading-4 shadow-[0_1px_1px_#0006]">
              {track.input}
              <Caret className="absolute right-[2px] top-1 text-[#6b6c6e]" />
            </button>
          )}
          <OutputButton value={track.output} />
          <div className="flex h-[15px] w-[75px] items-center rounded-[3px] border border-black bg-[#0b1d04] text-center text-[10px] leading-[9px] text-[#9ad82a]">
            <span className="w-9 border-r border-[#48701a] pl-[2px]">{track.level}</span>
            <span className="w-[18px]">P</span>
            <span className="w-[18px]">P</span>
          </div>
        </div>
      </div>
    </div>
  );
}

function LaneHead({ name }: { name: string }) {
  return (
    <div className="flex h-[70px]">
      <div className="h-2 w-[13px] rounded-bl-[2px] bg-[#16355f]" />
      <div className="flex w-[13px] flex-col items-center gap-[2px] bg-[#16355f] pt-[2px] text-[#8ba6c8]">
        <button aria-label={`Remove ${name} lane`} className="opacity-40">
          <svg width="10" height="9" viewBox="0 0 10 9" className="block" fill="none" stroke="currentColor"><circle cx="5" cy="4.500" r="4" /><path d="M3 4.500h4" strokeWidth="1.500" /></svg>
        </button>
        <button aria-label={`Add ${name} lane`}>
          <svg width="11" height="11" viewBox="0 0 11 11" className="block" fill="none" stroke="currentColor"><circle cx="5.500" cy="5.500" r="4.500" strokeWidth="1.500" /><path d="M3 5.500h5M5.500 3v5" strokeWidth="1.500" /></svg>
        </button>
      </div>
      <div className="ml-[2px] mt-px h-[68px] w-[92px] rounded-b-[2px] bg-[#686c71] pl-1 pt-[3px]">
        <PlateSelect label={`${name} lane`} value="volume" className="w-[85px] text-[#17181a]" />
      </div>
      <div className="ml-[2px] flex-1 border-t border-[#343c46] bg-[#28303a]" />
    </div>
  );
}

function Row({ head, kind, bg, children }: { head: ReactNode; kind: "audio" | "lane"; bg: string; children: ReactNode }) {
  return (
    <div className="flex">
      <div className="w-[356px] shrink-0">{head}</div>
      <Scale kind={kind} />
      <div className={clsx("relative h-[70px] min-w-0 flex-1 overflow-hidden border-b border-t border-b-[#737476] border-t-[#dcdcdc]", bg)}>
        {children}
      </div>
    </div>
  );
}

function Arrange() {
  return (
    <div className="min-w-0 flex-1">
      <ColumnHeaders />
      <Row head={<MasterRow />} kind="lane" bg="bg-[#b8b7b7]">
        <svg className="block h-full w-full">
          <Automation points={[[0, 18]]} fill="#aca5a5" />
        </svg>
      </Row>
      {TRACKS.map((track) => (
        <div key={track.name}>
          <Row head={<TrackHead track={track} />} kind="audio" bg="bg-[#b5b5b5]">
            <svg className="block h-full w-full">
              <rect y="33" width="100%" height="1" fill="#a9a9a9" />
              <TimelineGrid />
              <MarkerLines />
            </svg>
            <ClipView clip={track.clip} seed={track.seed} />
          </Row>
          <Row head={<LaneHead name={track.name} />} kind="lane" bg="bg-[#c1c1c1]">
            <svg className="block h-full w-full">
              <Automation points={track.automation} fill="#aeb1b7" />
            </svg>
          </Row>
        </div>
      ))}
    </div>
  );
}

const SCROLL_BTN = "flex items-center justify-center border border-[#4a4b4d] bg-[linear-gradient(#9b9c9d,#606163)] text-[#e6e6e6]";
const LIGHT_BTN = "flex items-center justify-center border border-[#77787a] bg-[linear-gradient(#b9babb,#97989a)] text-[#2a2b2d]";

function Sign({ plus }: { plus?: boolean }) {
  return (
    <svg width="7" height="7" viewBox="0 0 7 7" stroke="currentColor" strokeWidth="2">
      <path d={plus ? "M0 3.500h7M3.500 0v7" : "M0 3.500h7"} />
    </svg>
  );
}

function VerticalScroll() {
  return (
    <div className="flex w-[15px] shrink-0 flex-col">
      <button className="mt-[2px] flex h-[15px] items-center justify-between border border-[#f0c020] bg-[#2b2820] px-px text-[9px] font-bold leading-[9px] text-[#f0c020]">
        <span className="self-start leading-[6px]">a</span>
        <span className="self-end leading-[8px]">z</span>
      </button>
      <button aria-label="Waveform height" className={clsx(LIGHT_BTN, "h-[21px]")}>
        <svg width="9" height="9" viewBox="0 0 9 9" fill="currentColor"><path d="M0 4h9v1H0zM1 0l3.500 4.500L1 9zM5 1l3 3.500L5 8z" /></svg>
      </button>
      <button aria-label="Note height" className={clsx(LIGHT_BTN, "h-[21px]")}>
        <svg width="9" height="7" viewBox="0 0 9 7" fill="currentColor"><path d="M0 1h5v2H0zM4 4h5v2H4z" /></svg>
      </button>
      <button aria-label="Scroll up" className={clsx(SCROLL_BTN, "h-[17px]")}>
        <svg width="7" height="4" viewBox="0 0 7 4"><path d="M0 4h7L3.500 0z" fill="currentColor" /></svg>
      </button>
      <div className="flex flex-1 flex-col bg-[#a9a9a9]">
        <div className="h-9/10 border border-[#4a4b4d] bg-[linear-gradient(90deg,#8d8e8f,#505153)]" />
      </div>
      <button aria-label="Scroll down" className={clsx(SCROLL_BTN, "h-4")}>
        <Caret />
      </button>
      <button aria-label="Track height smaller" className={clsx(LIGHT_BTN, "h-[15px]")}><Sign /></button>
      <button aria-label="Track height larger" className={clsx(LIGHT_BTN, "h-[15px]")}><Sign plus /></button>
    </div>
  );
}

function HorizontalScroll() {
  return (
    <div className="flex h-[15px]">
      <div className="flex w-[371px] shrink-0 items-center rounded-bl-[4px] bg-[#4a4a4b] pl-[2px] text-[#d0d0d0]">
        <button aria-label="Go to selection">
          <svg width="11" height="10" viewBox="0 0 11 10" fill="currentColor"><path d="M0 0h1.500v10H0zM3 4h3V1l4.500 4L6 9V6H3z" /></svg>
        </button>
      </div>
      <button aria-label="Scroll left" className={clsx(SCROLL_BTN, "w-[17px]")}>
        <svg width="4" height="7" viewBox="0 0 4 7"><path d="M4 0v7L0 3.500z" fill="currentColor" /></svg>
      </button>
      <div className="flex flex-1 bg-[#a9a9a9]">
        <div className="w-1/2 border border-[#4a4b4d] border-t-[#bdbebf] bg-[linear-gradient(#8d8e8f,#505153)]" />
      </div>
      <button aria-label="Scroll right" className={clsx(SCROLL_BTN, "w-4")}>
        <svg width="4" height="7" viewBox="0 0 4 7"><path d="M0 0v7l4-3.500z" fill="currentColor" /></svg>
      </button>
      <button aria-label="Zoom out" className={clsx(LIGHT_BTN, "w-[15px]")}><Sign /></button>
      <button aria-label="Zoom in" className={clsx(LIGHT_BTN, "w-[15px]")}><Sign plus /></button>
      <button aria-label="Go to end" className="flex w-[31px] items-center rounded-br-[4px] bg-[#434344] pl-[3px] text-[#c8c8c8]">
        <svg width="11" height="10" viewBox="0 0 11 10" fill="currentColor"><path d="M9.500 0H11v10H9.500zM8 4H5V1L.5 5 5 9V6h3z" /></svg>
      </button>
    </div>
  );
}

function CloseGlyph() {
  return (
    <svg width="11" height="9" viewBox="0 0 11 9">
      <path d="M2 1l7 7M9 1L2 8" stroke="#5b3030" strokeWidth="3.600" />
      <path d="M2 1l7 7M9 1L2 8" stroke="#fff" strokeWidth="2.200" />
    </svg>
  );
}

function TitleBar() {
  return (
    <div className="flex h-[27px] items-start border-b border-[#55555c] bg-[linear-gradient(90deg,#d3d3de_0%,#d8d4dc_8%,#ddd2d8_14%,#d0c9d4_20%,#b4afc2_25%,#c9c1cc_29%,#e9dfdf_33%,#d9cdd2_38%,#b8b2c3_43%,#d6cdd4_48%,#e4dadc_53%,#bcb7c8_60%,#cfc8d2_66%,#e6dede_72%,#c9c4d0_77%,#a8a6bb_81%,#c2bfcc_85%,#a4a5ba_89%,#d7dae4_92%,#efe3dc_95%,#dcdbe2_100%)]">
      <Avid className="mt-1" />
      <span className="ml-[6px] flex-1 pt-1 text-xs leading-4 text-[#101014]">Pro Tools</span>
      <div className="flex h-[17px] overflow-hidden rounded-b-[4px] border border-t-0 border-[#45454d]">
        <button aria-label="Minimize" className="flex w-7 items-center justify-center border-r border-[#6a6a72] bg-[linear-gradient(#e4e0e6,#b7b2bd)]">
          <span className="mt-1 h-[4px] w-3 rounded-[1px] border border-[#50525a] bg-white" />
        </button>
        <button aria-label="Maximize" className="flex w-[27px] items-center justify-center bg-[linear-gradient(#e4e0e6,#b7b2bd)]">
          <span className="flex h-[9px] w-[11px] items-center justify-center rounded-[1px] border border-[#50525a] bg-white">
            <span className="h-[3px] w-[5px] border border-[#50525a]" />
          </span>
        </button>
        <button aria-label="Close" className="flex w-12 items-center justify-center bg-[linear-gradient(#e09a8c,#c8513c_48%,#b22c16_52%,#d0604a)]">
          <CloseGlyph />
        </button>
      </div>
    </div>
  );
}

function EditTitle() {
  return (
    <div className="flex h-[30px] items-center bg-[linear-gradient(#9ab4d2,#b9d0ea)] px-[2px] pt-[6px]">
      <Avid className="ml-[1px] h-[15px] w-[13px]" />
      <span className="ml-[10px] flex-1 text-xs leading-4 text-[#12161c]">Edit: EP Mastering</span>
      <div className="flex gap-[2px]">
        <button aria-label="Minimize edit window" className="flex h-[17px] w-[31px] items-center justify-center rounded-[2px] border border-[#55708f] bg-[linear-gradient(#cfdff0,#b3cae4_48%,#9bb7d6_52%,#b8d0ea)]">
          <span className="mt-1 h-[4px] w-[11px] rounded-[1px] border border-[#50525a] bg-white" />
        </button>
        <button aria-label="Restore edit window" className="flex h-[17px] w-[31px] items-center justify-center rounded-[2px] border border-[#55708f] bg-[linear-gradient(#cfdff0,#b3cae4_48%,#9bb7d6_52%,#b8d0ea)]">
          <svg width="12" height="11" viewBox="0 0 12 11" fill="#fff" stroke="#50525a">
            <rect x="4.500" y=".5" width="7" height="6" />
            <rect x=".5" y="4.500" width="7" height="6" />
            <rect x="2.500" y="6.500" width="3" height="2" />
          </svg>
        </button>
        <button aria-label="Close edit window" className="flex h-[17px] w-[31px] items-center justify-center rounded-[2px] border border-[#5a1a1a] bg-[linear-gradient(#e09a8c,#c8513c_48%,#b22c16_52%,#d0604a)]">
          <CloseGlyph />
        </button>
      </div>
    </div>
  );
}

export default function App() {
  return (
    <div className="flex min-h-screen flex-col overflow-hidden bg-[#6f8a94] font-['Noto_Sans','Open_Sans',sans-serif]">
      <TitleBar />
      <nav className="flex h-[21px] items-center gap-[15px] border-b border-[#2b2d33] bg-[linear-gradient(#ffffff_0%,#f1f3fa_35%,#d6dcee_40%,#dfe5f4_90%,#a8adbb_96%,#f4f4f8_100%)] px-[7px] text-[11px] text-[#15151a]">
        {MENUS.map((menu) => (
          <button key={menu}>{menu}</button>
        ))}
      </nav>
      <main className="mb-[2px] flex flex-1 flex-col border-b border-l-2 border-r-2 border-b-[#26323e] border-l-[#10141a] border-r-[#2f8f9c] bg-[#b9d0ea] px-[6px] pb-[6px]">
        <EditTitle />
        <Toolbar />
        <div className="bg-[#303133] px-[5px] pb-[5px] pt-[6px] font-['Liberation_Sans',sans-serif]">
          <Rulers />
          <div className="flex">
            <div className="flex min-w-0 flex-1 flex-col">
              <Arrange />
              <div className="flex h-[14px] shrink-0">
                <div className="mt-px w-[371px] rounded-l-[6px] bg-[#3a3a3b]" />
                <div className="flex-1 bg-[#858585]" />
              </div>
            </div>
            <VerticalScroll />
          </div>
          <HorizontalScroll />
        </div>
      </main>
    </div>
  );
}
